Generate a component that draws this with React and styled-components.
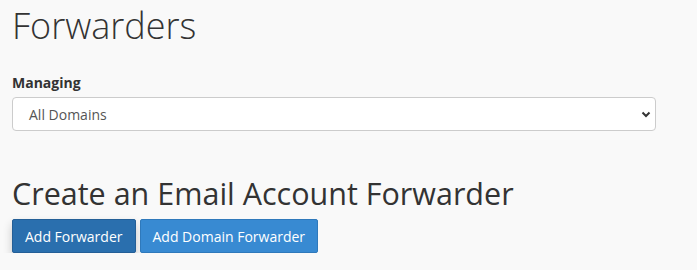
import React from 'react'
import styled, { createGlobalStyle } from 'styled-components'

const Global = createGlobalStyle`
    html, body {
        margin: 0;
        padding: 0;
        background: #f9f9f9;
    }
    body {
        font-family: 'Open Sans', 'Noto Sans', sans-serif;
        color: #333;
    }
`

const Page = styled.div`
    padding: 0 41px 0 12px;
    width: 644px;
`

const Title = styled.h1`
    margin: 0;
    padding-top: 3px;
    font-size: 36px;
    font-weight: 300;
    line-height: 46px;
    color: #333;
`

const Field = styled.div`
    margin-top: 24px;
`

const Label = styled.label`
    display: block;
    font-size: 14px;
    font-weight: 700;
    line-height: 20px;
    margin-bottom: 4px;
    color: #333;
`

const SelectBox = styled.div`
    height: 34px;
    box-sizing: border-box;
    border: 1px solid #ccc;
    border-radius: 4px;
    background: #fff;
    display: flex;
    align-items: center;
    padding: 0 4px 0 16px;
    font-size: 14px;
    color: #555;
`

const Value = styled.span`
    flex: 1;
`

const Section = styled.h2`
    margin: 42px 0 0;
    font-size: 30.5px;
    font-weight: 400;
    line-height: 40px;
    color: #333;
`

const Actions = styled.div`
    display: flex;
    gap: 4px;
    margin-top: 6px;
`

const Button = styled.button`
    height: 34px;
    box-sizing: border-box;
    padding: 0 12px;
    font-family: 'Open Sans', 'Noto Sans', sans-serif;
    font-size: 14px;
    color: #fff;
    border-radius: 2px;
    border: 1px solid ${(p) => (p.$active ? '#245f97' : '#2f79bb')};
    background: ${(p) => (p.$active ? '#2a6fae' : '#388ad2')};
    box-shadow: ${(p) => (p.$active ? '0 5px 10px rgba(0,0,0,0.2)' : 'none')};
`

const Chevron = () => (
    <svg width="10" height="7" viewBox="0 0 10 7">
        <path d="M1.5 1.5 L5 5 L8.5 1.5" fill="none" stroke="#333" strokeWidth="2" />
    </svg>
)

const App = () => {
    return (
        <Page>
            <Global />
            <Title>Forwarders</Title>
            <Field>
                <Label>Managing</Label>
                <SelectBox>
                    <Value>All Domains</Value>
                    <Chevron />
                </SelectBox>
            </Field>
            <Section>Create an Email Account Forwarder</Section>
            <Actions>
                <Button $active>Add Forwarder</Button>
                <Button>Add Domain Forwarder</Button>
            </Actions>
        </Page>
    )
}

export default App
